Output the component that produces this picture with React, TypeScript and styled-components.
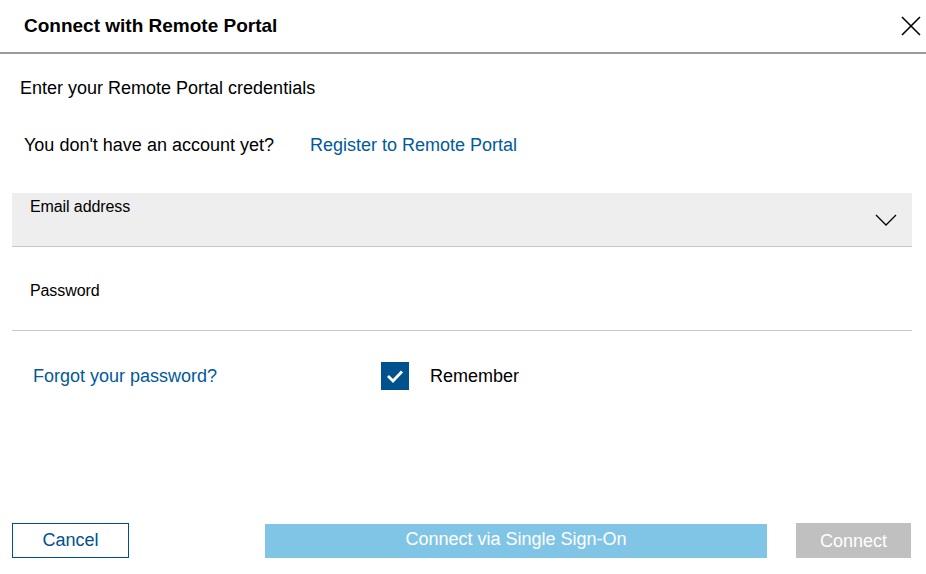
import React, { useState } from 'react'
import styled, { createGlobalStyle } from 'styled-components'

const GlobalStyle = createGlobalStyle`
  html, body {
    margin: 0;
    padding: 0;
    background: #fff;
  }
  body {
    font-family: 'Liberation Sans', Arial, sans-serif;
    color: #000;
  }
`

const StyledDialog = styled.div`
  width: 926px;
  height: 574px;
  display: flex;
  flex-direction: column;
  background: #fff;
  box-sizing: border-box;
`

const StyledHeader = styled.div`
  height: 52px;
  display: flex;
  align-items: center;
  justify-content: space-between;
  padding: 0 4px 0 24px;
  border-bottom: 2px solid #999;
  box-sizing: content-box;
`

const StyledTitle = styled.h1`
  margin: 0 0 2px;
  font-size: 19px;
  font-weight: 700;
  line-height: 1;
`

const StyledClose = styled.button`
  width: 22px;
  height: 22px;
  padding: 0;
  border: none;
  background: transparent;
  cursor: pointer;
  display: flex;
  align-items: center;
  justify-content: center;
`

const StyledBody = styled.div`
  flex: 1;
  display: flex;
  flex-direction: column;
  padding: 22px 14px 0 12px;
`

const StyledIntro = styled.p`
  margin: 0 0 0 8px;
  font-size: 18px;
  line-height: 24px;
`

const StyledAccountRow = styled.div`
  display: flex;
  align-items: center;
  gap: 36px;
  margin: 33px 0 0 12px;
  font-size: 18px;
  line-height: 24px;
`

const StyledLink = styled.a`
  color: #005a9b;
  text-decoration: none;
  font-size: 18px;
  cursor: pointer;
`

const StyledField = styled.div<{ $filled: boolean }>`
  height: ${(props) => (props.$filled ? '54px' : '84px')};
  margin-top: ${(props) => (props.$filled ? '36px' : '0')};
  padding: ${(props) => (props.$filled ? '5px' : '35px')} 15px 0 18px;
  display: flex;
  justify-content: space-between;
  align-items: flex-start;
  background: ${(props) => (props.$filled ? '#eeeeee' : '#fff')};
  border-bottom: 1px solid #c8c8c8;
  box-sizing: border-box;
`

const StyledLabel = styled.label`
  font-size: 16px;
  line-height: 18px;
  letter-spacing: -0.1px;
`

const StyledChevron = styled.span`
  margin-top: 16px;
  display: flex;
`

const StyledOptions = styled.div`
  display: flex;
  align-items: center;
  margin: 31px 0 0 21px;
  height: 28px;
`

const StyledForgot = styled(StyledLink)`
  width: 348px;
`

const StyledCheckbox = styled.button<{ $checked: boolean }>`
  width: 28px;
  height: 28px;
  padding: 0;
  border: 1px solid #00528f;
  background: ${(props) => (props.$checked ? '#00528f' : '#fff')};
  display: flex;
  align-items: center;
  justify-content: center;
  cursor: pointer;
  box-sizing: border-box;
`

const StyledCheckLabel = styled.span`
  margin-left: 21px;
  font-size: 18px;
`

const StyledFooter = styled.div`
  display: flex;
  align-items: center;
  padding: 0 15px 16px 12px;
`

const StyledButton = styled.button<{ $variant: 'outline' | 'sso' | 'disabled' }>`
  height: 35px;
  font-family: 'Liberation Sans', Arial, sans-serif;
  font-size: 18px;
  padding: 0;
  cursor: pointer;
  box-sizing: border-box;
  border: ${(props) => (props.$variant === 'outline' ? '1px solid #00508f' : 'none')};
  background: ${(props) =>
    props.$variant === 'outline' ? '#fff' : props.$variant === 'sso' ? '#80c5e6' : '#c0c0c0'};
  color: ${(props) => (props.$variant === 'outline' ? '#00508f' : '#fff')};
`

const StyledCancel = styled(StyledButton)`
  width: 117px;
  margin-right: 136px;
  margin-top: -1px;
`

const StyledSso = styled(StyledButton)`
  width: 502px;
  height: 34px;
  padding-bottom: 3px;
  margin-right: 29px;
`

const StyledConnect = styled(StyledButton)`
  width: 115px;
  padding-top: 2px;
`

export default function App() {
  const [remember, setRemember] = useState(true)

  return (
    <>
      <GlobalStyle />
      <StyledDialog>
        <StyledHeader>
          <StyledTitle>Connect with Remote Portal</StyledTitle>
          <StyledClose aria-label='Close'>
            <svg width='20' height='20' viewBox='0 0 20 20'>
              <path d='M1 1 L19 19 M19 1 L1 19' stroke='#000' strokeWidth='1.6' fill='none' />
            </svg>
          </StyledClose>
        </StyledHeader>
        <StyledBody>
          <StyledIntro>Enter your Remote Portal credentials</StyledIntro>
          <StyledAccountRow>
            <span>You don't have an account yet?</span>
            <StyledLink>Register to Remote Portal</StyledLink>
          </StyledAccountRow>
          <StyledField $filled>
            <StyledLabel>Email address</StyledLabel>
            <StyledChevron>
              <svg width='22' height='12' viewBox='0 0 22 12'>
                <path d='M1 1 L11 11 L21 1' stroke='#000' strokeWidth='1.3' fill='none' />
              </svg>
            </StyledChevron>
          </StyledField>
          <StyledField $filled={false}>
            <StyledLabel>Password</StyledLabel>
          </StyledField>
          <StyledOptions>
            <StyledForgot>Forgot your password?</StyledForgot>
            <StyledCheckbox $checked={remember} onClick={() => setRemember(!remember)}>
              {remember && (
                <svg width='18' height='14' viewBox='0 0 18 14'>
                  <path d='M2 7 L7 12 L16 2.5' stroke='#fff' strokeWidth='2.8' fill='none' />
                </svg>
              )}
            </StyledCheckbox>
            <StyledCheckLabel>Remember</StyledCheckLabel>
          </StyledOptions>
        </StyledBody>
        <StyledFooter>
          <StyledCancel $variant='outline'>Cancel</StyledCancel>
          <StyledSso $variant='sso'>Connect via Single Sign-On</StyledSso>
          <StyledConnect $variant='disabled'>Connect</StyledConnect>
        </StyledFooter>
      </StyledDialog>
    </>
  )
}
